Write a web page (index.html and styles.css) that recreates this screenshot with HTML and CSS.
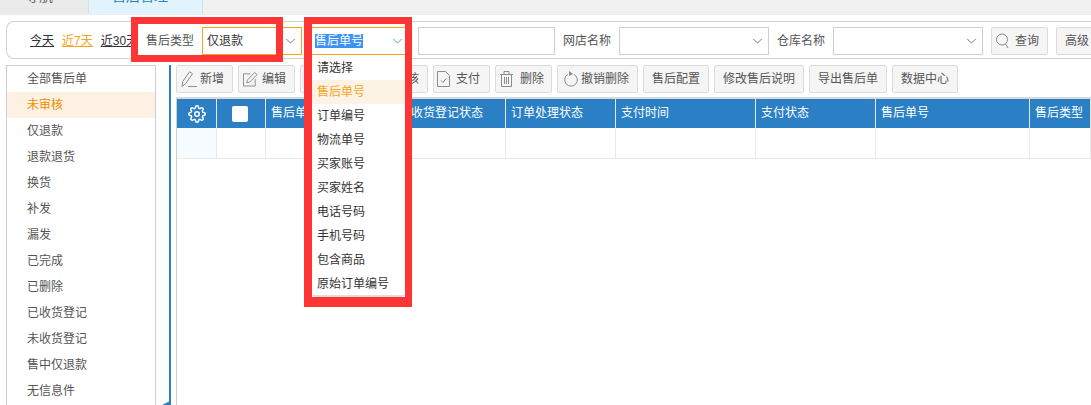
FILE: index.html
```html
<!DOCTYPE html>
<html lang="zh">
<head>
<meta charset="utf-8">
<title>售后管理</title>
<link rel="stylesheet" href="styles.css">
</head>
<body>
<div class="tabs">
  <div class="tab tab-nav"><span>导航</span></div>
  <div class="tab tab-active"><span>售后管理</span><span class="tab-x">×</span></div>
</div>
<div class="filter">
  <div class="dates"><a>今天</a><a class="on">近7天</a><a>近30天</a></div>
  <span class="flabel">售后类型</span>
  <div class="sel s1"><span>仅退款</span><svg class="chev" viewBox="0 0 12 7"><path d="M1 1l5 5 5-5"/></svg></div>
  <div class="sel s2"><span class="picked">售后单号</span><svg class="chev blue" viewBox="0 0 12 7"><path d="M1 1l5 5 5-5"/></svg></div>
  <div class="inp"></div>
  <span class="flabel after-field">网店名称</span>
  <div class="sel s3"><svg class="chev" viewBox="0 0 12 7"><path d="M1 1l5 5 5-5"/></svg></div>
  <span class="flabel after-field">仓库名称</span>
  <div class="sel s3"><svg class="chev" viewBox="0 0 12 7"><path d="M1 1l5 5 5-5"/></svg></div>
  <div class="btn qbtn"><svg class="ic" viewBox="0 0 13 16"><circle cx="6" cy="6.500" r="5.500"/><path d="M9.500 11l2.500 4"/></svg>查询</div>
  <div class="btn gbtn">高级</div>
</div>
<div class="main">
  <ul class="side">
    <li>全部售后单</li>
    <li class="cur">未审核</li>
    <li>仅退款</li>
    <li>退款退货</li>
    <li>换货</li>
    <li>补发</li>
    <li>漏发</li>
    <li>已完成</li>
    <li>已删除</li>
    <li>已收货登记</li>
    <li>未收货登记</li>
    <li>售中仅退款</li>
    <li>无信息件</li>
  </ul>
  <div class="content">
    <div class="tools">
      <div class="btn b-add"><svg class="ic" viewBox="0 0 16 16"><path d="M1 15.500l.8-5L8.500.8l3 2-6.700 9.700z"/><path d="M7 15.500h9"/></svg>新增</div>
      <div class="btn b-edit"><svg class="ic" viewBox="0 0 16 16"><path d="M13 8v7.500H.5V2.500H8"/><path d="M4 12l.8-3L12.500 1l2.500 2.300L7.200 11.300z"/></svg>编辑</div>
      <div class="btn b-audit">审核</div>
      <div class="btn b-pay"><svg class="ic" viewBox="0 0 13 16"><path d="M.5.500h8l4 4v11H.5z"/><path d="M4 9.500l2 2 3-4"/></svg>支付</div>
      <div class="btn b-del"><svg class="ic" viewBox="0 0 13 16"><path d="M0 3.500h13M4 3.500V.5h5v3M1.500 3.500v12h10v-12M4.500 6v7M6.500 6v7M8.500 6v7"/></svg>删除</div>
      <div class="btn b-undo"><svg class="ic" viewBox="0 0 14 16"><path d="M4 3.300a6.300 6.300 0 1 0 6 0"/><path class="solid" d="M5 0l4 3-4 2z"/></svg>撤销删除</div>
      <div class="btn b-w66">售后配置</div>
      <div class="btn b-w90">修改售后说明</div>
      <div class="btn b-w78">导出售后单</div>
      <div class="btn b-w66">数据中心</div>
    </div>
    <div class="gridwrap">
      <table class="grid">
        <colgroup>
          <col class="c0"><col class="c1"><col class="c2"><col class="c3"><col class="c4"><col class="c5"><col class="c6"><col class="c7"><col class="c8">
        </colgroup>
        <thead>
          <tr>
            <th class="ctr"><svg class="gear" viewBox="0 0 24 24"><circle cx="12" cy="12" r="3"/><path d="M19.400 15a1.650 1.650 0 0 0 .33 1.820l.06.06a2 2 0 0 1 0 2.830 2 2 0 0 1-2.830 0l-.06-.06a1.650 1.650 0 0 0-1.820-.33 1.650 1.650 0 0 0-1 1.510V21a2 2 0 0 1-2 2 2 2 0 0 1-2-2v-.09A1.650 1.650 0 0 0 9 19.400a1.650 1.650 0 0 0-1.820.33l-.06.06a2 2 0 0 1-2.830 0 2 2 0 0 1 0-2.830l.06-.06a1.650 1.650 0 0 0 .33-1.820 1.650 1.650 0 0 0-1.510-1H3a2 2 0 0 1-2-2 2 2 0 0 1 2-2h.09A1.650 1.650 0 0 0 4.600 9a1.650 1.650 0 0 0-.33-1.820l-.06-.06a2 2 0 0 1 0-2.830 2 2 0 0 1 2.830 0l.06.06a1.650 1.650 0 0 0 1.820.33H9a1.650 1.650 0 0 0 1-1.510V3a2 2 0 0 1 2-2 2 2 0 0 1 2 2v.09a1.650 1.650 0 0 0 1 1.510 1.650 1.650 0 0 0 1.820-.33l.06-.06a2 2 0 0 1 2.830 0 2 2 0 0 1 0 2.830l-.06.06a1.650 1.650 0 0 0-.33 1.820V9a1.650 1.650 0 0 0 1.510 1H21a2 2 0 0 1 2 2 2 2 0 0 1-2 2h-.09a1.650 1.650 0 0 0-1.510 1z"/></svg></th>
            <th class="chk"><span class="check"></span></th>
            <th>售后单号</th>
            <th class="under">收货登记状态</th>
            <th>订单处理状态</th>
            <th>支付时间</th>
            <th>支付状态</th>
            <th>售后单号</th>
            <th>售后类型</th>
          </tr>
        </thead>
        <tbody>
          <tr><td class="tint"></td><td></td><td></td><td></td><td></td><td></td><td></td><td></td><td></td></tr>
        </tbody>
      </table>
    </div>
  </div>
</div>
<div class="corner"></div>
<ul class="drop">
  <li>请选择</li>
  <li class="hl">售后单号</li>
  <li>订单编号</li>
  <li>物流单号</li>
  <li>买家账号</li>
  <li>买家姓名</li>
  <li>电话号码</li>
  <li>手机号码</li>
  <li>包含商品</li>
  <li>原始订单编号</li>
</ul>
<div class="mark m1"></div>
<div class="mark m2"></div>
</body>
</html>
```
FILE: styles.css
```css
* { box-sizing: border-box; }
html, body { margin: 0; padding: 0; }
body {
  width: 1091px;
  height: 405px;
  overflow: hidden;
  position: relative;
  background: #fff;
  color: #444;
  font: 12px/1.2 "Liberation Sans", "Noto Sans CJK SC", sans-serif;
}
.tabs {
  display: flex;
  height: 15px;
  background: #f1f1f1;
  border-bottom: 1px solid #ececec;
  overflow: hidden;
}
.tab {
  height: 14px;
  display: flex;
  align-items: flex-end;
  padding-bottom: 10px;
  font-size: 14px;
  flex: none;
}
.tab span { line-height: 16px; flex: none; }
.tab-nav { width: 88px; padding-left: 25px; color: #666; background: #ebebeb; }
.tab-active {
  width: 115px;
  padding-left: 23px;
  background: #e1f3fc;
  border-left: 1px solid #d6dfe4;
  border-right: 1px solid #d6dfe4;
  color: #2a7fc5;
}
.tab-x { margin-left: 14px; }
.filter {
  display: flex;
  align-items: center;
  width: 1085px;
  height: 38px;
  margin: 6px 0 0 6px;
  padding: 2px 0 0 23px;
  border: 1px solid #d2d2d2;
  border-right: 0;
  border-radius: 8px 0 0 8px;
  white-space: nowrap;
}
.dates { display: flex; gap: 8px; width: 116px; overflow: hidden; flex: none; }
.dates a { text-decoration: underline; color: #333; }
.dates a.on { color: #f7a41d; }
.flabel { color: #555; flex: none; }
.after-field { margin: 0 8px; }
.sel {
  position: relative;
  height: 28px;
  border: 1px solid #cfcfcf;
  display: flex;
  align-items: center;
  flex: none;
  background: #fff;
}
.s1 { width: 100px; margin-left: 8px; padding-left: 4px; border-color: #f7a41d; color: #333; }
.s2 { width: 100px; margin-left: 9px; padding-left: 4px; border-color: #f7a41d; border-width: 1px 0; }
.picked { background: #3d92f5; color: #fff; }
.s3 { width: 150px; }
.chev {
  position: absolute;
  right: 5px;
  top: 10px;
  width: 11px;
  height: 6px;
  fill: none;
  stroke: #666;
  stroke-width: 1;
}
.chev.blue { right: 8px; stroke: #3b8edb; }
.inp { width: 137px; height: 28px; margin-left: 7px; border: 1px solid #cfcfcf; flex: none; }
.btn {
  display: flex;
  align-items: center;
  height: 28px;
  border: 1px solid #dcdcdc;
  border-radius: 2px;
  background: #f5f5f5;
  color: #555;
  flex: none;
  white-space: nowrap;
}
.qbtn { width: 57px; margin-left: 8px; padding-left: 4px; gap: 6px; }
.gbtn { width: 50px; margin-left: 8px; padding-left: 8px; }
.ic { width: 13px; height: 16px; fill: none; stroke: #8c8c8c; stroke-width: 1; flex: none; overflow: visible; }
.ic .solid { fill: #8c8c8c; stroke: none; }
.main { display: flex; margin-top: 6px; }
.side {
  list-style: none;
  margin: 0 0 0 6px;
  padding: 0;
  width: 150px;
  height: 340px;
  border: 1px solid #cfcfcf;
  border-bottom: 0;
  flex: none;
}
.side li { height: 26px; line-height: 27px; padding-left: 20px; color: #555; }
.side li.cur { background: #fdf1e3; color: #f08c00; }
.content {
  display: flex;
  flex-direction: column;
  margin-left: 13px;
  width: 922px;
  height: 340px;
  border-left: 2px solid #2a7fc5;
  padding-left: 5px;
  flex: none;
}
.tools {
  display: flex;
  gap: 5px;
  height: 34px;
  padding-bottom: 4px;
  border-bottom: 2px solid #d9d9d9;
  flex: none;
}
.tools .btn { justify-content: center; }
.tools .b-add, .tools .b-edit, .tools .b-pay, .tools .b-del, .tools .b-undo { justify-content: flex-start; }
.b-add { width: 57px; padding-left: 4px; gap: 3px; }
.b-add .ic { width: 16px; }
.b-edit { width: 57px; padding-left: 4px; gap: 4px; }
.b-edit .ic { width: 15px; }
.tools .b-audit { width: 128px; justify-content: flex-end; padding-right: 8px; }
.b-pay { width: 57px; padding-left: 3px; gap: 6px; }
.b-del { width: 57px; padding-left: 4px; gap: 7px; }
.b-undo { width: 81px; padding-left: 6px; gap: 3px; }
.b-undo .ic { width: 14px; }
.b-w66 { width: 66px; }
.b-w90 { width: 90px; }
.b-w78 { width: 78px; }
.gridwrap { flex: 1; border-left: 1px solid #cfcfcf; }
.grid {
  border-collapse: separate;
  border-spacing: 0;
  table-layout: fixed;
  width: 914px;
}
.c0 { width: 40px; }
.c1 { width: 49px; }
.c2 { width: 140px; }
.c3 { width: 100px; }
.c4 { width: 110px; }
.c5 { width: 140px; }
.c6 { width: 120px; }
.c7 { width: 154px; }
.c8 { width: 61px; }
.grid th {
  height: 29px;
  padding: 0 0 0 5px;
  background: #2a7fc5;
  color: #fff;
  font-weight: normal;
  text-align: left;
  border-right: 1px solid #dfeaf3;
  white-space: nowrap;
  overflow: hidden;
}
.grid th.ctr { padding: 0; }
.grid th.chk { padding: 0 0 0 15px; }
.grid td { height: 31px; border-right: 1px solid #e9e9e9; border-bottom: 1px solid #e9e9e9; }
.grid td.tint { background: #f6fbff; }
.gear { width: 18px; height: 18px; fill: none; stroke: #fff; stroke-width: 2; display: block; margin: 0 auto; }
.check { display: block; width: 16px; height: 16px; background: #fff; border-radius: 2px; }
.corner {
  position: absolute;
  left: 162px;
  top: 401px;
  width: 0;
  height: 0;
  border-left: 8px solid transparent;
  border-bottom: 4px solid #2a7fc5;
}
.drop {
  position: absolute;
  left: 312px;
  top: 55px;
  width: 93px;
  height: 242px;
  margin: 0;
  padding: 1px 0 0;
  list-style: none;
  background: #fff;
  border-bottom: 2px solid #dedede;
  border-radius: 0 0 4px 4px;
}
.drop li { height: 24px; line-height: 25px; padding-left: 5px; color: #333; }
.drop li.hl { background: #fdf3e4; color: #f7a41d; }
.mark { position: absolute; border-style: solid; border-color: #fd3535; }
.m1 { left: 131px; top: 17px; width: 152px; height: 45px; border-width: 7px; }
.m2 { left: 304px; top: 17px; width: 108px; height: 290px; border-width: 7px 7px 10px 8px; }
```
